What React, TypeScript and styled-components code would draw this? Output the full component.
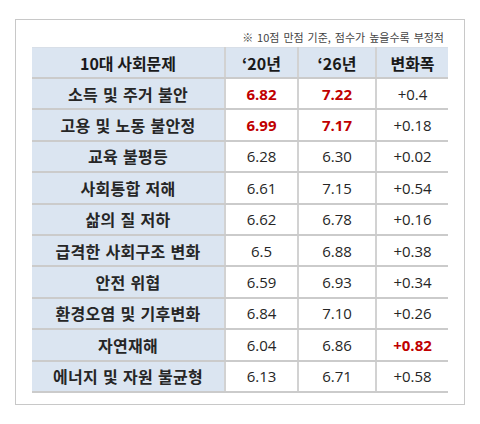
import React from 'react';
import styled, { createGlobalStyle } from 'styled-components';

interface Row {
	label: string;
	y20: string;
	y26: string;
	diff: string;
	hot20?: boolean;
	hot26?: boolean;
	hotDiff?: boolean;
}

const rows: Row[] = [
	{ label: '소득 및 주거 불안', y20: '6.82', y26: '7.22', diff: '+0.4', hot20: true, hot26: true },
	{ label: '고용 및 노동 불안정', y20: '6.99', y26: '7.17', diff: '+0.18', hot20: true, hot26: true },
	{ label: '교육 불평등', y20: '6.28', y26: '6.30', diff: '+0.02' },
	{ label: '사회통합 저해', y20: '6.61', y26: '7.15', diff: '+0.54' },
	{ label: '삶의 질 저하', y20: '6.62', y26: '6.78', diff: '+0.16' },
	{ label: '급격한 사회구조 변화', y20: '6.5', y26: '6.88', diff: '+0.38' },
	{ label: '안전 위협', y20: '6.59', y26: '6.93', diff: '+0.34' },
	{ label: '환경오염 및 기후변화', y20: '6.84', y26: '7.10', diff: '+0.26' },
	{ label: '자연재해', y20: '6.04', y26: '6.86', diff: '+0.82', hotDiff: true },
	{ label: '에너지 및 자원 불균형', y20: '6.13', y26: '6.71', diff: '+0.58' },
];

export default function App() {
	return (
		<>
			<GlobalStyle />
			<Frame>
				<Note>※ 10점 만점 기준, 점수가 높을수록 부정적</Note>
				<Table>
					<colgroup>
						<col style={{ width: 193 }} />
						<col style={{ width: 73 }} />
						<col style={{ width: 78 }} />
						<col style={{ width: 72 }} />
					</colgroup>
					<thead>
						<tr>
							<HeadCell>10대 사회문제</HeadCell>
							<HeadCell>‘20년</HeadCell>
							<HeadCell>‘26년</HeadCell>
							<HeadCell>변화폭</HeadCell>
						</tr>
					</thead>
					<tbody>
						{rows.map((r) => (
							<tr key={r.label}>
								<LabelCell>{r.label}</LabelCell>
								<ValueCell hot={r.hot20}>{r.y20}</ValueCell>
								<ValueCell hot={r.hot26}>{r.y26}</ValueCell>
								<ValueCell hot={r.hotDiff}>{r.diff}</ValueCell>
							</tr>
						))}
					</tbody>
				</Table>
			</Frame>
		</>
	);
}

const GlobalStyle = createGlobalStyle`
	body {
		margin: 0;
		background: #fff;
		font-family: "Open Sans", "Noto Sans CJK KR", sans-serif;
	}
`;

const Frame = styled.div`
	box-sizing: border-box;
	width: 450px;
	height: 386px;
	margin: 19px 0 0 15px;
	padding: 7px 18px 0 16px;
	border: 1px solid #c8c8c8;
	display: flex;
	flex-direction: column;
`;

const Note = styled.div`
	align-self: flex-end;
	margin-right: 2px;
	height: 20px;
	font-family: "Noto Sans CJK KR", sans-serif;
	font-size: 11px;
	word-spacing: 1.5px;
	line-height: 20px;
	color: #444;
`;

const Table = styled.table`
	width: 416px;
	table-layout: fixed;
	border-collapse: collapse;
	border-top: 1px solid #d8dfe8;
`;

const Cell = styled.td`
	height: 29.4px;
	padding: 0;
	text-align: center;
	border-bottom: 2px solid #cbcbcb;
	border-left: 2px solid #d2d2d2;
	&:first-child {
		border-left: none;
	}
`;

const HeadCell = styled(Cell).attrs({ as: 'th' })`
	height: 29px;
	background: #dbe5f1;
	font-family: "Noto Sans CJK KR", sans-serif;
	font-size: 16px;
	font-weight: 700;
	color: #1a1a1a;
`;

const LabelCell = styled(Cell)`
	background: #dbe5f1;
	font-family: "Noto Sans CJK KR", sans-serif;
	font-size: 16px;
	font-weight: 700;
	letter-spacing: 0.3px;
	word-spacing: 1px;
	color: #262626;
`;

const ValueCell = styled(Cell)<{ hot?: boolean }>`
	background: #fff;
	font-size: 15px;
	font-weight: ${({ hot }) => (hot ? 700 : 400)};
	color: ${({ hot }) => (hot ? '#c00000' : '#262626')};
`;
